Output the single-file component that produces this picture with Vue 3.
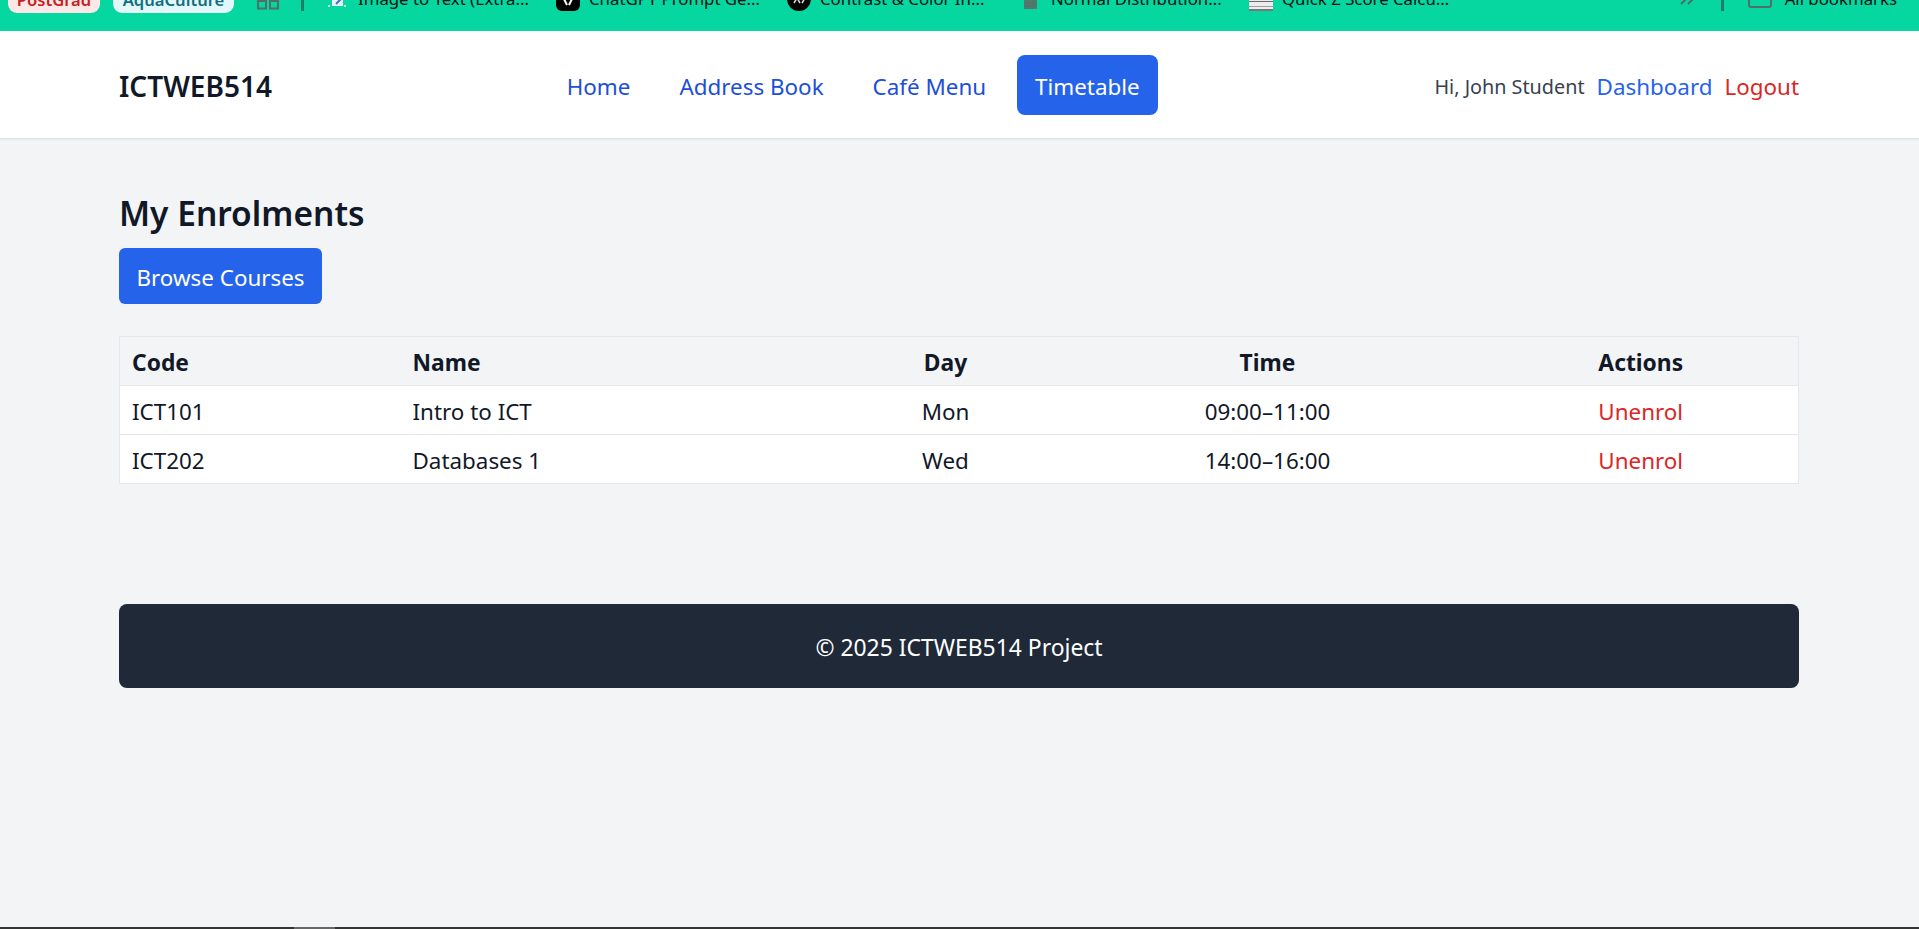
<script setup>
const bookmarks = [
  { name: 'Image to Text (Extra...', icon: 'img' },
  { name: 'ChatGPT Prompt Ge...', icon: 'chat' },
  { name: 'Contrast & Color In...', icon: 'contrast' },
  { name: 'Normal Distribution...', icon: 'normal' },
  { name: 'Quick Z Score Calcu...', icon: 'quick' },
]

const links = ['Home', 'Address Book', 'Café Menu', 'Timetable']

const enrolments = [
  { code: 'ICT101', name: 'Intro to ICT', day: 'Mon', time: '09:00–11:00' },
  { code: 'ICT202', name: 'Databases 1', day: 'Wed', time: '14:00–16:00' },
]
</script>

<template>
  <div class="page">
    <!-- browser bookmarks bar, cut off at the top of the capture -->
    <div class="bookmarks">
      <span class="pill pill-red">PostGrad</span>
      <span class="pill pill-blue">AquaCulture</span>
      <svg class="grid-icon" width="22" height="10" viewBox="0 0 22 10">
        <rect x="1" y="1" width="8" height="7.5" fill="none" stroke="#4f6f68" stroke-width="2" />
        <rect x="13" y="1" width="8" height="7.5" fill="none" stroke="#4f6f68" stroke-width="2" />
      </svg>
      <span class="sep"></span>
      <div class="marks">
        <div v-for="b in bookmarks" :key="b.name" class="mark">
          <div class="mark-icon">
            <svg v-if="b.icon === 'img'" width="18" height="7" viewBox="0 0 18 7">
              <rect x="4" y="-4" width="11" height="10" fill="#eaf4ff" />
              <path d="M8 4 L13 -1" stroke="#3b6fd4" stroke-width="2" />
              <circle cx="1" cy="6" r="1" fill="#fff" />
              <circle cx="17" cy="6" r="1" fill="#fff" />
            </svg>
            <svg v-else-if="b.icon === 'chat'" width="24" height="11" viewBox="0 0 24 11">
              <rect x="0" y="-13" width="24" height="24" rx="6" fill="#000" />
              <path d="M8 -1 L11 5 M16 -1 L13 5" stroke="#fff" stroke-width="2" fill="none" />
            </svg>
            <svg v-else-if="b.icon === 'contrast'" width="24" height="11" viewBox="0 0 24 11">
              <circle cx="12" cy="-1" r="12" fill="#000" />
              <path d="M7 3 L10 -2 L13 3 M15 3 L18 -2" stroke="#ddd" stroke-width="1.5" fill="none" />
            </svg>
            <svg v-else-if="b.icon === 'normal'" width="13" height="9" viewBox="0 0 13 9">
              <rect width="13" height="9" fill="#4a7f70" />
              <path d="M0 3 H13 M0 6 H13 M4 0 V9 M9 0 V9" stroke="#5c6f68" stroke-width="1" />
            </svg>
            <svg v-else width="24" height="11" viewBox="0 0 24 11">
              <rect width="24" height="11" fill="#ececec" />
              <rect y="1" width="24" height="1" fill="#6a6a6a" />
              <rect y="6" width="24" height="1" fill="#a0a0a0" />
              <rect y="9" width="24" height="2" fill="#777" />
            </svg>
          </div>
          <span>{{ b.name }}</span>
        </div>
      </div>
      <div class="bar-end">
        <svg class="chev" width="14" height="5" viewBox="0 0 14 5">
          <path d="M1 4 L6 -1 M8 4 L13 -1" stroke="#4f6f68" stroke-width="2" fill="none" />
        </svg>
        <span class="sep"></span>
        <svg class="box" width="24" height="8" viewBox="0 0 24 8">
          <rect x="1" y="-8" width="22" height="15" rx="2" fill="none" stroke="#4f6f68" stroke-width="2" />
        </svg>
        <span class="all">All bookmarks</span>
      </div>
    </div>

    <nav class="nav">
      <div class="logo">ICTWEB514</div>
      <ul class="links">
        <li v-for="l in links" :key="l" :class="{ active: l === 'Timetable' }">{{ l }}</li>
      </ul>
      <div class="user">
        <span class="hi">Hi, John Student</span>
        <a class="dash">Dashboard</a>
        <a class="logout">Logout</a>
      </div>
    </nav>

    <main class="main">
      <h1>My Enrolments</h1>
      <a class="btn">Browse Courses</a>

      <table class="table">
        <colgroup>
          <col class="c-code" />
          <col class="c-name" />
          <col class="c-day" />
          <col class="c-time" />
          <col />
        </colgroup>
        <thead>
          <tr>
            <th>Code</th>
            <th>Name</th>
            <th class="mid">Day</th>
            <th class="mid">Time</th>
            <th class="mid">Actions</th>
          </tr>
        </thead>
        <tbody>
          <tr v-for="e in enrolments" :key="e.code">
            <td>{{ e.code }}</td>
            <td>{{ e.name }}</td>
            <td class="mid">{{ e.day }}</td>
            <td class="mid">{{ e.time }}</td>
            <td class="mid"><a class="logout">Unenrol</a></td>
          </tr>
        </tbody>
      </table>

      <footer class="footer">© 2025 ICTWEB514 Project</footer>
    </main>

    <div class="taskbar"><span class="thumb"></span></div>
  </div>
</template>

<style>
html, body {
  margin: 0;
  background: #f3f4f6;
}
</style>

<style scoped>
.page {
  height: 929px;
  overflow: hidden;
  display: flex;
  flex-direction: column;
  font-family: "Noto Sans", "Open Sans", sans-serif;
  color: #111827;
  font-size: 22.4px;
}

.bookmarks {
  height: 31px;
  flex: none;
  overflow: hidden;
  background: #06d6a0;
  display: flex;
  align-items: flex-start;
  padding: 0 22px 0 8px;
  box-sizing: border-box;
  color: #111;
  font-size: 16.8px;
}

.pill {
  height: 31px;
  margin-top: -18px;
  padding-top: 4px;
  border-radius: 9px;
  box-sizing: border-box;
  display: flex;
  align-items: center;
  justify-content: center;
  font-weight: 600;
  font-size: 16.6px;
}
.pill-red {
  width: 92px;
  background: #fde8e8;
  color: #c81e1e;
}
.pill-blue {
  width: 121px;
  margin-left: 13px;
  background: #e3f6fa;
  color: #0f6f7f;
}
.grid-icon {
  margin-left: 23px;
}
.sep {
  width: 3px;
  height: 11px;
  background: #1d7f68;
  flex: none;
}
.bookmarks > .sep {
  margin-left: 22px;
}

.marks {
  display: flex;
  margin-left: 21px;
}
.mark {
  width: 231px;
  flex: none;
  display: flex;
  align-items: flex-start;
  gap: 9px;
}
.mark-icon {
  width: 24px;
  flex: none;
  display: flex;
  justify-content: center;
}
.mark span {
  margin-top: -11px;
  line-height: 20px;
}

.bar-end {
  margin-left: auto;
  display: flex;
  align-items: flex-start;
}
.chev {
  margin-right: 27px;
}
.box {
  margin: 0 13px 0 24px;
}
.all {
  margin-top: -11px;
  line-height: 20px;
}

.nav {
  flex: none;
  height: 108px;
  box-sizing: border-box;
  background: #fff;
  border-bottom: 1px solid #e2e3e6;
  box-shadow: 0 1px 2px rgba(0, 0, 0, 0.05);
  padding: 0 120px 0 119px;
  display: flex;
  align-items: center;
  justify-content: space-between;
}
.logo {
  font-size: 28px;
  font-weight: 600;
  padding-top: 2px;
}
.links {
  list-style: none;
  margin: 0;
  padding: 0;
  display: flex;
  gap: 13px;
  color: #1d4ed8;
}
.links li {
  height: 60px;
  line-height: 64px;
  padding: 0 18px;
  border-radius: 8px;
}
.links .active {
  background: #2563eb;
  color: #fff;
}
.user {
  display: flex;
  align-items: center;
  gap: 12px;
  padding-top: 4px;
}
.hi {
  font-size: 19.8px;
  color: #374151;
}
.dash {
  color: #2563eb;
}
.logout {
  color: #dc2626;
}

.main {
  flex: 1;
  padding: 0 120px 0 119px;
}
h1 {
  margin: 51px 0 0;
  font-size: 33.5px;
  font-weight: 600;
  line-height: 46px;
}
.btn {
  display: inline-block;
  margin-top: 12px;
  height: 56px;
  line-height: 60px;
  padding: 0 17.5px;
  border-radius: 6px;
  background: #2563eb;
  color: #fff;
}
.table {
  margin-top: 32px;
  width: 100%;
  table-layout: fixed;
  border-collapse: collapse;
  background: #fff;
}
.c-code { width: 281px; }
.c-name { width: 439px; }
.c-day { width: 212px; }
.c-time { width: 432px; }
th, td {
  height: 49px;
  padding: 2px 12px 0;
  box-sizing: border-box;
  border: 1px solid #e5e7eb;
  border-left: 0;
  border-right: 0;
  text-align: left;
  font-weight: 400;
}
th {
  background: #f3f4f6;
  font-weight: 700;
  font-size: 22.8px;
}
th:first-child, td:first-child {
  border-left: 1px solid #e5e7eb;
}
th:last-child, td:last-child {
  border-right: 1px solid #e5e7eb;
}
.table .mid {
  text-align: center;
}
.footer {
  margin-top: 120px;
  height: 84px;
  line-height: 88px;
  text-align: center;
  background: #1f2937;
  color: #fff;
  border-radius: 8px;
  font-size: 22.9px;
}

.taskbar {
  flex: none;
  height: 2px;
  background: #333;
  position: relative;
}
.thumb {
  position: absolute;
  left: 294px;
  top: 0;
  width: 41px;
  height: 2px;
  background: #666;
}
</style>
